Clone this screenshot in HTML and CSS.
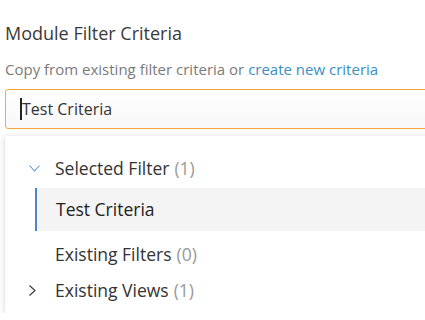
FILE: index.html
```html
<!DOCTYPE html>
<html lang="en">
<head>
    <meta charset="UTF-8">
    <title>Module Filter Criteria</title>
    <link rel="stylesheet" href="styles.css">
</head>
<body>
    <div class="filter-panel">
        <h2 class="title">Module Filter Criteria</h2>
        <p class="hint">Copy from existing filter criteria or <a href="#">create new criteria</a></p>
        <div class="search-box">
            <span class="caret"></span>
            <span class="search-value">Test Criteria</span>
        </div>
        <div class="dropdown">
            <div class="group">
                <span class="chevron">
                    <svg width="11" height="7" viewBox="0 0 11 7"><path d="M0.5 0.5 L5.5 6 L10.5 0.5" fill="none" stroke="#5b93cf" stroke-width="1.1"/></svg>
                </span>
                <span class="label">Selected Filter</span>
                <span class="count">(1)</span>
            </div>
            <div class="item selected">Test Criteria</div>
            <div class="group">
                <span class="chevron"></span>
                <span class="label">Existing Filters</span>
                <span class="count">(0)</span>
            </div>
            <div class="group">
                <span class="chevron">
                    <svg width="7" height="11" viewBox="0 0 7 11"><path d="M0.5 0.5 L6 5.5 L0.5 10.5" fill="none" stroke="#333" stroke-width="1.1"/></svg>
                </span>
                <span class="label">Existing Views</span>
                <span class="count">(1)</span>
            </div>
        </div>
    </div>
</body>
</html>
```

FILE: styles.css
```css
body {
    margin: 0;
    font-family: "Open Sans", Arial, sans-serif;
    background: #fff;
    color: #333;
}

.filter-panel {
    padding: 20px 0 0 5px;
    width: 440px;
}

.title {
    margin: 0;
    font-size: 18px;
    font-weight: 400;
    color: #3a3a3a;
    line-height: 26px;
}

.hint {
    margin: 13px 0 0;
    font-size: 15px;
    color: #7a7a7a;
    line-height: 20px;
}

.hint a {
    color: #3a8fc2;
    text-decoration: none;
}

.search-box {
    margin-top: 10px;
    height: 38px;
    border: 1px solid #f5a63b;
    border-radius: 3px;
    background: linear-gradient(#fff, #f8f8f8);
    display: flex;
    align-items: center;
    padding-left: 14px;
}

.caret {
    width: 2px;
    height: 22px;
    background: #222;
}

.search-value {
    font-size: 16px;
    color: #333;
}

.dropdown {
    margin-top: 7px;
    background: #fff;
    box-shadow: 0 1px 6px rgba(0, 0, 0, 0.18);
    padding: 14px 0 5px;
}

.group {
    display: flex;
    align-items: center;
    height: 36px;
    font-size: 17.5px;
}

.chevron {
    width: 50px;
    flex: none;
    display: flex;
    align-items: center;
    padding-left: 24px;
    box-sizing: border-box;
}

.label {
    color: #333;
}

.count {
    color: #999;
    margin-left: 5px;
}

.item {
    margin: 2px 0 0 30px;
    height: 43px;
    line-height: 43px;
    padding-left: 19px;
    border-left: 2px solid #4a86c5;
    background: #f4f4f4;
    font-size: 17.5px;
    color: #222;
}

.item + .group {
    margin-top: 5px;
}
```
